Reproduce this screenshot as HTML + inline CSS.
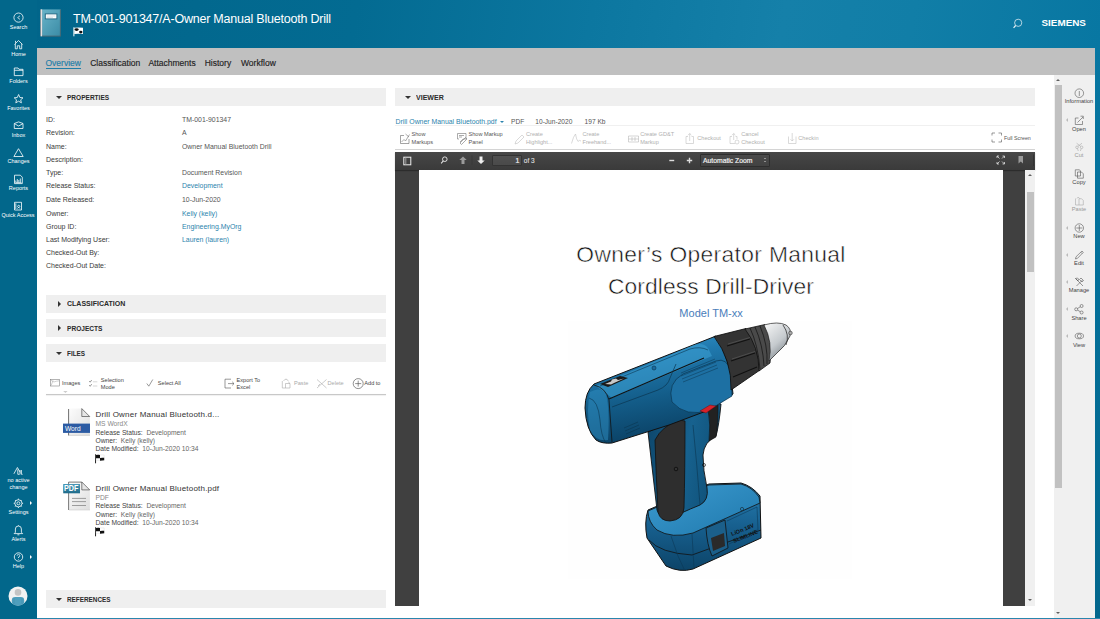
<!DOCTYPE html>
<html><head><meta charset="utf-8">
<style>
*{box-sizing:border-box;margin:0;padding:0}
html,body{width:1100px;height:619px;overflow:hidden;background:#fff;font-family:"Liberation Sans",sans-serif;color:#333}
.a{position:absolute;white-space:nowrap}
#side{position:absolute;left:0;top:0;width:37px;height:619px;background:#02678b}
#hdr{position:absolute;left:37px;top:0;width:1063px;height:48px;background:linear-gradient(100deg,#01658a 0%,#036b92 30%,#0c77a0 52%,#1580a9 70%,#117ea7 82%,#0877a2 100%)}
#rstrip{position:absolute;left:1095px;top:48px;width:5px;height:571px;background:linear-gradient(#0877a2,#04709a 40%,#02668c)}
#tabs{position:absolute;left:37px;top:48px;width:1058px;height:26.5px;background:#c0c0c0}
#bline{position:absolute;left:37px;top:617.5px;width:1063px;height:1.5px;background:#2a86ad}
.sec{position:absolute;background:#efefef;height:18px}
.sec .t{position:absolute;left:20.8px;top:5.8px;font-size:7.2px;line-height:8px;font-weight:bold;color:#2a2a2a;transform:scaleX(0.875);transform-origin:0 0}
.tri{position:absolute;width:0;height:0}
.tri.d{left:10.2px;top:7.6px;border-left:3.2px solid transparent;border-right:3.2px solid transparent;border-top:3.5px solid #333}
.tri.r{left:12px;top:6.2px;border-top:3.2px solid transparent;border-bottom:3.2px solid transparent;border-left:3.5px solid #333}
.pl{font-size:7px;line-height:8px;color:#3a3a3a}
.pv{font-size:6.9px;line-height:8px;color:#555}
.lnk{color:#2b83ad}
.ft{font-size:5.6px;line-height:7px;color:#444}.ft.dis{color:#aaa}.fn{font-size:8px;line-height:9px;color:#333;letter-spacing:.2px}.fl{font-size:6.7px;line-height:8px;color:#444}.fl .g{color:#666}
.vr{font-size:6.6px;line-height:8px;color:#555}.mt{font-size:5.6px;line-height:7px;color:#555}.mt.dis{color:#b0b0b0}
.rt{left:1063px;width:32px;text-align:center;font-size:5.7px;line-height:6px;color:#444}.rt.dis{color:#999}.rtri{left:1066px;width:0;height:0;border-top:2px solid transparent;border-bottom:2px solid transparent;border-right:2px solid #bbb}
.sb{position:absolute;left:0;width:37px;text-align:center;color:#fff;font-size:5.5px;line-height:6px}
.sb svg{display:block;margin:0 auto}
</style></head><body>
<div id="side"></div>
<div id="hdr"></div>
<div id="tabs"></div>
<div id="rstrip"></div>
<div id="bline"></div>


<!-- sidebar -->
<svg class="a" style="left:0;top:0" width="37" height="619" viewBox="0 0 37 619" fill="none" stroke="#fff" stroke-width="0.8">
 <!-- search -->
 <circle cx="18.5" cy="17.6" r="4.6"/>
 <path d="M20 15.8 L17.6 17.6 L20 19.4" stroke-width="0.7"/>
 <!-- home -->
 <path d="M14.5 44.5 L18.5 40.5 L22.5 44.5 M15.3 43.8 V48.8 H17.3 V45.8 H19.7 V48.8 H21.7 V43.8 M15.5 40.8 V42.8"/>
 <!-- folders -->
 <path d="M14.3 68 H18 L19 69.3 H23 V75.6 H14.3 Z M14.3 70.3 H23"/>
 <!-- favorites -->
 <path d="M18.6 94.5 L19.9 97.5 L23 97.8 L20.7 99.8 L21.4 102.8 L18.6 101.2 L15.8 102.8 L16.5 99.8 L14.2 97.8 L17.3 97.5 Z"/>
 <!-- inbox -->
 <path d="M14.3 123.5 L18.6 121.9 L23 123.5 V128.5 H14.3 Z M14.3 123.6 L18.6 126 L23 123.6"/>
 <!-- changes -->
 <path d="M18.5 148.7 L23.2 156.5 H13.9 Z"/>
 <!-- reports -->
 <path d="M14.5 175.2 H20.3 L22.3 177.2 V183.6 H14.5 Z M15.8 182.5 V180.5 M17.3 182.5 V179 M18.8 182.5 V180 M20.3 182.5 V178.5 M15.5 182.7 H21.5"/>
 <!-- quick access -->
 <path d="M14.5 202.3 H21.5 V210 H14.5 Z M15.8 203.3 V209 M18.7 205.3 A1.1 1.1 0 1 1 18.69 205.3 M17.5 208.5 L18.7 207.3 L19.9 208.5"/>
 <!-- no active change -->
 <path d="M13.9 473.8 L17.4 467.5 L20.2 472.3 M17.8 469.4 V474.3 H19.6 M20 470 V474.3 M21.4 470 V474.3 H22.6" />
 <!-- settings -->
 <circle cx="18.4" cy="503.3" r="3.6"/><circle cx="18.4" cy="503.3" r="1.5"/>
 <path d="M18.4 498.6 V499.7 M18.4 506.9 V508 M13.7 503.3 H14.8 M22 503.3 H23.1 M15.1 500 L15.9 500.8 M20.9 505.8 L21.7 506.6 M15.1 506.6 L15.9 505.8 M20.9 500.8 L21.7 500"/>
 <!-- alerts -->
 <path d="M15.4 532.3 V529 A3 3 0 0 1 21.4 529 V532.3 L22.7 533.6 H14.1 Z M17.4 534.8 H19.4 M18.4 525.3 V526"/>
 <!-- help -->
 <circle cx="18.5" cy="557" r="4.2"/>
 <path d="M17.2 555.7 A1.3 1.3 0 1 1 18.5 557 V558 M18.5 559 V559.6" stroke-width="0.7"/>
</svg>
<div class="a" style="left:30px;top:500.5px;width:0;height:0;border-top:2.3px solid transparent;border-bottom:2.3px solid transparent;border-left:2.3px solid #fff"></div>
<div class="a" style="left:30px;top:554.5px;width:0;height:0;border-top:2.3px solid transparent;border-bottom:2.3px solid transparent;border-left:2.3px solid #fff"></div>
<svg class="a" style="left:8px;top:585.5px" width="20" height="20" viewBox="0 0 20 20">
 <circle cx="10" cy="10" r="9.5" fill="#f2f2f2"/>
 <clipPath id="avc"><circle cx="10" cy="10" r="9.5"/></clipPath>
 <g clip-path="url(#avc)">
 <path d="M3.8 20 V14.2 Q3.8 10.9 7.2 10.9 H12.8 Q16.2 10.9 16.2 14.2 V20 Z" fill="#4f9fbd"/>
 <path d="M6 12 V20 M14 12 V20" stroke="#3f8aa8" stroke-width="0.5"/>
 <circle cx="10" cy="6.4" r="3.3" fill="#c4c4c4"/>
 </g>
</svg>
<div class="sb" style="top:24.2px">Search</div>
<div class="sb" style="top:51px">Home</div>
<div class="sb" style="top:77.8px">Folders</div>
<div class="sb" style="top:105px">Favorites</div>
<div class="sb" style="top:131.5px">Inbox</div>
<div class="sb" style="top:158px">Changes</div>
<div class="sb" style="top:185px">Reports</div>
<div class="sb" style="top:212px;left:-0.5px">Quick Access</div>
<div class="sb" style="top:477.2px">no active</div>
<div class="sb" style="top:484.2px">change</div>
<div class="sb" style="top:508.8px">Settings</div>
<div class="sb" style="top:535.6px">Alerts</div>
<div class="sb" style="top:562.6px">Help</div>

<!-- header content -->
<svg class="a" style="left:40px;top:8.5px" width="22" height="28" viewBox="0 0 22 28">
 <defs><linearGradient id="bk" x1="0" y1="0" x2="1" y2="1"><stop offset="0" stop-color="#6ab5ca"/><stop offset="1" stop-color="#3a8ba5"/></linearGradient>
 <linearGradient id="sp" x1="0" y1="0" x2="1" y2="0"><stop offset="0" stop-color="#9a8a88"/><stop offset="0.5" stop-color="#f4eeee"/><stop offset="1" stop-color="#b8b0b0"/></linearGradient></defs>
 <rect x="0.4" y="0.4" width="20.4" height="26.9" fill="url(#bk)"/>
 <rect x="0.4" y="0.4" width="1.8" height="26.9" fill="url(#sp)"/>
 <path d="M20.4 0.5 V27.2 M2 27.1 H20.6" stroke="#4c5a60" stroke-width="0.7"/>
 <rect x="5.3" y="4.9" width="11.6" height="5" fill="#fff" stroke="#1f6580" stroke-width="0.9"/>
 <path d="M6.6 7 H15.4 M6.6 8.4 H13" stroke="#9bb8c4" stroke-width="0.4"/>
</svg>

<div class="a" style="left:73px;top:12px;font-size:12.5px;letter-spacing:-0.22px;color:#fff">TM-001-901347/A-Owner Manual Bluetooth Drill</div>
<div class="a" style="left:1041.5px;top:16.5px;font-size:9.9px;font-weight:bold;color:#fff;letter-spacing:0px">SIEMENS</div>
<svg class="a" style="left:1010px;top:16px" width="14" height="14" viewBox="0 0 14 14" fill="none" stroke="#e8f2f6" stroke-width="0.75"><circle cx="8.2" cy="6.8" r="3.6"/><path d="M5.6 9.5 L3.6 11.8" stroke-width="1.2"/></svg>

<svg class="a" style="left:72.5px;top:26.5px" width="11" height="10" viewBox="0 0 11 10"><path d="M0.9 0.3 V9.3" stroke="#fff" stroke-width="1"/><path d="M1.3 0.7 Q5 0.2 10 0.7 V7 Q5 6.6 1.3 7 Z" fill="#fff"/><ellipse cx="3.6" cy="2.6" rx="2" ry="1.3" fill="#111"/><ellipse cx="7.8" cy="5.1" rx="1.7" ry="1.3" fill="#111"/></svg>
<!-- tabs -->
<div class="a" style="left:45.5px;top:57.6px;font-size:8.5px;color:#1f7ea8;-webkit-text-stroke:0.15px #1f7ea8">Overview</div>
<div class="a" style="left:46px;top:68px;width:35px;height:1.2px;background:#1f7ea8"></div>
<div class="a" style="left:90.2px;top:57.6px;font-size:8.5px;color:#222;-webkit-text-stroke:0.15px #222">Classification</div>
<div class="a" style="left:148.4px;top:57.6px;font-size:8.5px;color:#222;-webkit-text-stroke:0.15px #222">Attachments</div>
<div class="a" style="left:204.7px;top:57.6px;font-size:8.5px;color:#222;-webkit-text-stroke:0.15px #222">History</div>
<div class="a" style="left:241px;top:57.6px;font-size:8.5px;color:#222;-webkit-text-stroke:0.15px #222">Workflow</div>

<!-- left panel sections -->
<div class="sec" style="left:46px;top:88px;width:340px"><div class="tri d"></div><div class="t" style="transform:scaleX(0.91)">PROPERTIES</div></div>
<div class="sec" style="left:46px;top:294.5px;width:340px"><div class="tri r"></div><div class="t" style="transform:scaleX(0.975)">CLASSIFICATION</div></div>
<div class="sec" style="left:46px;top:319px;width:340px"><div class="tri r"></div><div class="t" style="transform:scaleX(0.916)">PROJECTS</div></div>
<div class="sec" style="left:46px;top:344px;width:340px"><div class="tri d"></div><div class="t" style="transform:scaleX(0.89)">FILES</div></div>
<div class="sec" style="left:46px;top:590px;width:340px"><div class="tri d"></div><div class="t" style="transform:scaleX(0.886)">REFERENCES</div></div>

<div class="sec" style="left:395px;top:88px;width:640px"><div class="tri d"></div><div class="t" style="transform:scaleX(0.98)">VIEWER</div></div>

<!-- properties -->
<div class="a pl" style="left:46px;top:116.1px">ID:</div><div class="a pv" style="left:182px;top:116.1px">TM-001-901347</div>
<div class="a pl" style="left:46px;top:129.2px">Revision:</div><div class="a pv" style="left:182px;top:129.2px">A</div>
<div class="a pl" style="left:46px;top:142.7px">Name:</div><div class="a pv" style="left:182px;top:142.7px">Owner Manual Bluetooth Drill</div>
<div class="a pl" style="left:46px;top:155.8px">Description:</div>
<div class="a pl" style="left:46px;top:168.8px">Type:</div><div class="a pv" style="left:182px;top:168.8px">Document Revision</div>
<div class="a pl" style="left:46px;top:181.9px">Release Status:</div><div class="a pv lnk" style="left:182px;top:181.9px">Development</div>
<div class="a pl" style="left:46px;top:196.3px">Date Released:</div><div class="a pv" style="left:182px;top:196.3px">10-Jun-2020</div>
<div class="a pl" style="left:46px;top:209.7px">Owner:</div><div class="a pv lnk" style="left:182px;top:209.7px">Kelly (kelly)</div>
<div class="a pl" style="left:46px;top:223.0px">Group ID:</div><div class="a pv lnk" style="left:182px;top:223.0px">Engineering.MyOrg</div>
<div class="a pl" style="left:46px;top:236.1px">Last Modifying User:</div><div class="a pv lnk" style="left:182px;top:236.1px">Lauren (lauren)</div>
<div class="a pl" style="left:46px;top:248.7px">Checked-Out By:</div>
<div class="a pl" style="left:46px;top:261.7px">Checked-Out Date:</div>

<!-- files toolbar -->
<svg class="a" style="left:40px;top:370px" width="350" height="30" viewBox="40 370 350 30" fill="none" stroke="#555" stroke-width="0.6">
 <!-- images -->
 <rect x="50.4" y="379.4" width="9.3" height="6.6" stroke="#777" stroke-width="0.55"/>
 <path d="M51.2 385.4 L53 380.5 M51 380.3 L54 382 L56.5 381.2 L59.3 380.8" stroke="#999" stroke-width="0.45"/>
 <path d="M63.2 391.2 H67.6 L65.4 392.8 Z" fill="#bbb" stroke="none"/>
 <!-- selection mode -->
 <path d="M89.2 381 L90.2 382.2 L91.7 380 M89.2 385.1 L90.2 386.3 L91.7 384.1" stroke="#555" stroke-width="0.6"/>
 <path d="M92.9 381.8 H97.3 M92.9 386 H97.3" stroke="#bbb" stroke-width="0.6"/>
 <!-- select all -->
 <path d="M146.8 383.5 L148.8 386.2 L152.8 379.5" stroke-width="0.6"/>
 <!-- export -->
 <path d="M231 379.2 H225 V388 H231 M228 383.6 H234 M232.2 381.8 L234 383.6 L232.2 385.4" stroke-width="0.6"/>
 <!-- paste -->
 <path d="M282.3 381 V388 H290 V383.5 L288.2 381.8 M283.5 381 L285 379.3 H287 L288.2 381" stroke="#aaa" stroke-width="0.6"/>
 <path d="M285.5 383.5 H290 M285.5 383.5 V388" stroke="#aaa" stroke-width="0.6"/>
 <!-- delete -->
 <path d="M317 379.5 L326.5 388 M326.5 379.5 L317 388 M318 386 L320 384" stroke="#aaa" stroke-width="0.6"/>
 <!-- add to -->
 <circle cx="358.2" cy="383.6" r="5" stroke-width="0.65"/>
 <path d="M358.2 380.6 V386.6 M355.2 383.6 H361.2" stroke-width="0.65"/>
</svg>
<div class="a ft" style="left:62px;top:380px">Images</div>
<div class="a ft" style="left:100.8px;top:377.2px">Selection</div>
<div class="a ft" style="left:100.8px;top:384px">Mode</div>
<div class="a ft" style="left:157.8px;top:380px">Select All</div>
<div class="a ft" style="left:236.6px;top:377.2px">Export To</div>
<div class="a ft" style="left:236.6px;top:384px">Excel</div>
<div class="a ft dis" style="left:294px;top:380px">Paste</div>
<div class="a ft dis" style="left:327.5px;top:380px">Delete</div>
<div class="a ft" style="left:364.3px;top:380px">Add to</div>
<div class="a" style="left:46px;top:394.3px;width:340px;height:1.2px;background:#c8c8c8;box-shadow:0 0.6px 0.8px rgba(0,0,0,.12)"></div>

<!-- file 1 -->
<svg class="a" style="left:60px;top:405px" width="32" height="32" viewBox="60 405 32 32">
 <defs><linearGradient id="pg" x1="0" y1="0" x2="1" y2="1"><stop offset="0" stop-color="#fdfdfd"/><stop offset="1" stop-color="#dedede"/></linearGradient></defs>
 <path d="M68.3 408.4 H81.8 L89.9 416.5 V435.2 H68.3 Z" fill="url(#pg)"/>
 <path d="M68.6 409 V435.5" stroke="#333" stroke-width="0.7"/>
 <path d="M81.8 408.6 V416.5 H89.7 Z" fill="#e6e6e6" stroke="#333" stroke-width="0.6" stroke-linejoin="round"/>
 <path d="M69 435.4 H90" stroke="#c8c8c8" stroke-width="0.7"/>
 <rect x="63" y="423.6" width="27" height="9.3" fill="#2c5ba3"/>
</svg>
<div class="a" style="left:65px;top:424.8px;font-size:6.6px;line-height:7px;color:#fff">Word</div>
<div class="a fn" style="left:95.5px;top:410px">Drill Owner Manual Bluetooth.d...</div>
<div class="a fl" style="left:95.5px;top:419.8px;color:#888">MS WordX</div>
<div class="a fl" style="left:95.5px;top:428.5px"><span class="k">Release Status:</span>&nbsp; <span class="g">Development</span></div>
<div class="a fl" style="left:95.5px;top:437px"><span class="k">Owner:</span>&nbsp; <span class="g">Kelly (kelly)</span></div>
<div class="a fl" style="left:95.5px;top:445.3px"><span class="k">Date Modified:</span>&nbsp; <span class="g">10-Jun-2020 10:34</span></div>
<svg class="a flag" style="left:95px;top:453.6px" width="11" height="10" viewBox="0 0 11 10"><path d="M0.55 0.3 V9.3" stroke="#222" stroke-width="1"/><path d="M1 1 Q3 0.6 5 0.9 H9.2 V6.4 H1 Z" fill="#fff" stroke="#ccc" stroke-width="0.3"/><path d="M1 1 Q3 0.6 5 0.9 V4.3 Q3 4 1 4.3 Z M5 3.9 Q7 3.6 9.2 3.8 V6.3 Q7 6.5 5 6.8 Z" fill="#111"/></svg>

<!-- file 2 -->
<svg class="a" style="left:60px;top:478px" width="32" height="36" viewBox="60 478 32 36">
 <defs><linearGradient id="pdfb" x1="0" y1="0" x2="0" y2="1"><stop offset="0" stop-color="#4a98b8"/><stop offset="1" stop-color="#1f6b8a"/></linearGradient></defs>
 <path d="M68.3 481.8 H81.8 L89.9 489.9 V509.8 H68.3 Z" fill="url(#pg)"/>
 <path d="M68.6 510 V482.1 H81.8" stroke="#444" stroke-width="0.7" fill="none"/>
 <path d="M81.8 482 V489.9 H89.7 Z" fill="#e6e6e6" stroke="#333" stroke-width="0.6" stroke-linejoin="round"/>
 <path d="M69 509.9 H90" stroke="#c8c8c8" stroke-width="0.7"/>
 <path d="M72 498.4 H86 M72 501.6 H86 M72 505.5 H86" stroke="#7a7a7a" stroke-width="0.7"/>
 <rect x="63.2" y="484" width="16.8" height="9.3" fill="url(#pdfb)"/>
</svg>
<div class="a" style="left:64.3px;top:484.2px;font-size:9px;line-height:8.5px;font-weight:bold;color:#fff;transform:scaleX(0.8);transform-origin:0 0">PDF</div>
<div class="a fn" style="left:95.5px;top:484px">Drill Owner Manual Bluetooth.pdf</div>
<div class="a fl" style="left:95.5px;top:493.5px;color:#888">PDF</div>
<div class="a fl" style="left:95.5px;top:502px"><span class="k">Release Status:</span>&nbsp; <span class="g">Development</span></div>
<div class="a fl" style="left:95.5px;top:510.6px"><span class="k">Owner:</span>&nbsp; <span class="g">Kelly (kelly)</span></div>
<div class="a fl" style="left:95.5px;top:519.1px"><span class="k">Date Modified:</span>&nbsp; <span class="g">10-Jun-2020 10:34</span></div>
<svg class="a flag" style="left:95px;top:526.7px" width="11" height="10" viewBox="0 0 11 10"><path d="M0.55 0.3 V9.3" stroke="#222" stroke-width="1"/><path d="M1 1 Q3 0.6 5 0.9 H9.2 V6.4 H1 Z" fill="#fff" stroke="#ccc" stroke-width="0.3"/><path d="M1 1 Q3 0.6 5 0.9 V4.3 Q3 4 1 4.3 Z M5 3.9 Q7 3.6 9.2 3.8 V6.3 Q7 6.5 5 6.8 Z" fill="#111"/></svg>

<!-- viewer file row -->
<div class="a" style="left:395.5px;top:118px;font-size:6.9px;line-height:8px;color:#2b83ad">Drill Owner Manual Bluetooth.pdf</div>
<div class="a" style="left:499.8px;top:121.3px;width:0;height:0;border-left:2.2px solid transparent;border-right:2.2px solid transparent;border-top:2.4px solid #2b83ad"></div>
<div class="a vr" style="left:511px;top:117.5px">PDF</div>
<div class="a vr" style="left:535.3px;top:117.5px">10-Jun-2020</div>
<div class="a vr" style="left:584.6px;top:117.5px">197 Kb</div>
<div class="a" style="left:395px;top:125px;width:640px;height:0.8px;background:#f0f0f0"></div>

<!-- markup toolbar -->
<svg class="a" style="left:395px;top:128px" width="640" height="20" viewBox="395 128 640 20" fill="none" stroke="#666" stroke-width="0.6">
 <path d="M400.5 135.5 H404 M400.5 135.5 V143.5 H409 V139" />
 <path d="M401.5 142 L404 139.5 L405.5 141 L409.5 134.5 M405.5 134 L409 137" stroke-width="0.55"/>
 <path d="M457.5 133.5 H466 V139 H463 L460 142 M457.5 133.5 V139 H459 M459 135.5 H464 M459 137 H462" stroke-width="0.55"/>
 <path d="M460 143 L465.5 137.5 L467 139 L461.5 144.5 Z" stroke-width="0.55"/>
 <path d="M515 144 L516 141 L522 135 L524 137 L518 143 Z" stroke="#bbb" stroke-width="0.55"/>
 <path d="M571.5 143.5 Q573.5 136 575.5 134 Q576.5 140 578 141.5 Q579 139.5 581 141" stroke="#bbb" stroke-width="0.55"/>
 <path d="M628.5 136 H638.5 V142 H628.5 Z M628.5 139 H638.5 M632 137 V141 M635 137 V141" stroke="#aaa" stroke-width="0.5"/>
 <path d="M686 136.5 V143.5 H693.5 V136.5 H691.5 M686 136.5 H688 M689.7 141 V133.5 M688 135.2 L689.7 133.5 L691.4 135.2" stroke="#bbb" stroke-width="0.55"/>
 <path d="M730 136.5 V143.5 H735 M730 136.5 H732 M733.7 140 V133.5 M732 135.2 L733.7 133.5 L735.4 135.2 M735.5 136.5 H737 V139" stroke="#bbb" stroke-width="0.55"/>
 <circle cx="737" cy="142" r="2" stroke="#bbb" stroke-width="0.55"/>
 <path d="M788.5 136.5 V143.5 H796 V136.5 M792.2 133 V141 M790.5 139.3 L792.2 141 L793.9 139.3" stroke="#bbb" stroke-width="0.55"/>
 <path d="M992 135.5 V133 H995 M998.5 133 H1001.5 V135.5 M1001.5 139.5 V142 H998.5 M995 142 H992 V139.5" stroke="#555" stroke-width="0.6"/>
</svg>
<div class="a mt" style="left:411.5px;top:131.2px">Show</div>
<div class="a mt" style="left:411.5px;top:138.5px">Markups</div>
<div class="a mt" style="left:468.5px;top:131.2px">Show Markup</div>
<div class="a mt" style="left:468.5px;top:138.5px">Panel</div>
<div class="a mt dis" style="left:526px;top:131.2px">Create</div>
<div class="a mt dis" style="left:526px;top:138.5px">Highlight...</div>
<div class="a mt dis" style="left:582.5px;top:131.2px">Create</div>
<div class="a mt dis" style="left:582.5px;top:138.5px">Freehand...</div>
<div class="a mt dis" style="left:640.2px;top:131.2px">Create GD&amp;T</div>
<div class="a mt dis" style="left:640.2px;top:138.5px">Markup</div>
<div class="a mt dis" style="left:697.3px;top:135.0px">Checkout</div>
<div class="a mt dis" style="left:741.2px;top:131.2px">Cancel</div>
<div class="a mt dis" style="left:741.2px;top:138.5px">Checkout</div>
<div class="a mt dis" style="left:798.3px;top:135.0px">Checkin</div>
<div class="a mt" style="left:1004px;top:135.0px;font-size:5.3px">Full Screen</div>
<div class="a" style="left:395px;top:148.6px;width:640px;height:1.4px;background:#d4d4d4"></div>

<!-- pdf viewer -->
<div class="a" style="left:395px;top:152px;width:640px;height:454px;background:#404040"></div>
<div class="a" style="left:395px;top:152px;width:640px;height:18px;background:linear-gradient(#474747,#3a3a3a);box-shadow:0 1px 1px rgba(0,0,0,.3)"></div>
<div class="a" style="left:418.8px;top:170px;width:584.5px;height:436px;background:#fff"></div>
<div class="a" style="left:1025.4px;top:170px;width:9.2px;height:436px;background:#f0f0f0"></div>
<div class="a" style="left:1026.5px;top:192px;width:7px;height:80px;background:#c1c1c1"></div>
<div class="a" style="left:1027.8px;top:173.5px;width:0;height:0;border-left:2.2px solid transparent;border-right:2.2px solid transparent;border-bottom:2.4px solid #606060"></div>
<div class="a" style="left:1027.8px;top:599px;width:0;height:0;border-left:2.2px solid transparent;border-right:2.2px solid transparent;border-top:2.4px solid #606060"></div>
<svg class="a" style="left:395px;top:152px" width="640" height="18" viewBox="395 152 640 18">
 <rect x="403.8" y="157.2" width="7" height="7.6" fill="none" stroke="#eee" stroke-width="1"/>
 <path d="M405.8 157.2 V164.8" stroke="#aaa" stroke-width="0.9"/>
 <circle cx="444.8" cy="159.2" r="2.3" fill="none" stroke="#eee" stroke-width="0.9"/>
 <path d="M443.2 161 L441.2 163.3" stroke="#eee" stroke-width="1.1"/>
 <path d="M463 156.5 L459.3 160 H461.5 V164 H464.5 V160 H466.7 Z" fill="#9a9a9a"/>
 <path d="M472 155.5 V164.5" stroke="#333" stroke-width="0.6"/>
 <path d="M481 164 L477.3 160.5 H479.5 V156.5 H482.5 V160.5 H484.7 Z" fill="#eee"/>
 <path d="M669.3 160.5 H674.2" stroke="#ddd" stroke-width="1.4"/>
 <path d="M686.8 160.5 H692.2 M689.5 157.8 V163.2" stroke="#ddd" stroke-width="1.4"/>
 <path d="M997 156 L999.5 158.5 M997 156 H999 M997 156 V158 M1004.5 156 L1002 158.5 M1004.5 156 H1002.5 M1004.5 156 V158 M997 164 L999.5 161.5 M997 164 H999 M997 164 V162 M1004.5 164 L1002 161.5 M1004.5 164 H1002.5 M1004.5 164 V162" stroke="#ddd" stroke-width="0.8"/>
 <path d="M1018.5 156 H1023 V163.5 L1020.75 161.5 L1018.5 163.5 Z" fill="#9a9a9a"/>
 <path d="M1033.5 154.5 V166" stroke="#2e2e2e" stroke-width="0.7"/>
</svg>
<div class="a" style="left:491.5px;top:154.7px;width:30px;height:11.6px;background:linear-gradient(#505050,#4a4a4a);border:0.6px solid #333;border-radius:1px"></div>
<div class="a" style="left:491.5px;top:155.2px;width:28px;text-align:right;font-size:7px;line-height:11px;color:#eee;-webkit-text-stroke:0.2px #eee">1</div>
<div class="a" style="left:523.8px;top:155.2px;font-size:6.5px;line-height:11px;color:#ddd;-webkit-text-stroke:0.15px #ddd">of 3</div>
<div class="a" style="left:699.5px;top:153.8px;width:70px;height:12.8px;background:linear-gradient(#4a4a4a,#424242);border:0.6px solid #2e2e2e;border-radius:1px"></div>
<div class="a" style="left:703px;top:155.2px;font-size:6.8px;line-height:11px;color:#eee;-webkit-text-stroke:0.2px #eee">Automatic Zoom</div>
<div class="a" style="left:763.5px;top:158px;width:0;height:0;border-left:1.6px solid transparent;border-right:1.6px solid transparent;border-bottom:1.8px solid #ddd"></div>
<div class="a" style="left:763.5px;top:161px;width:0;height:0;border-left:1.6px solid transparent;border-right:1.6px solid transparent;border-top:1.8px solid #ddd"></div>

<!-- outer scrollbar + right toolbar -->
<div class="a" style="left:1053.8px;top:74.5px;width:41.2px;height:543px;background:#f0f0f0"></div>
<div class="a" style="left:1055px;top:85px;width:7px;height:403px;background:#c1c1c1"></div>
<div class="a" style="left:1056.3px;top:78.5px;width:0;height:0;border-left:2.2px solid transparent;border-right:2.2px solid transparent;border-bottom:2.4px solid #606060"></div>
<div class="a" style="left:1056.3px;top:612px;width:0;height:0;border-left:2.2px solid transparent;border-right:2.2px solid transparent;border-top:2.4px solid #606060"></div>

<!-- right toolbar -->
<svg class="a" style="left:1063px;top:80px" width="32" height="270" viewBox="1063 80 32 270" fill="none" stroke="#555" stroke-width="0.6">
 <circle cx="1079.3" cy="93.2" r="4.3"/><path d="M1079.3 91 V96"/>
 <path d="M1078.5 118 H1075.3 V124.5 H1082.5 V121 M1077.5 122.5 L1083 117 M1080.5 116.2 H1083.3 V119" />
 <g stroke="#aaa"><circle cx="1077" cy="147.3" r="1.3"/><circle cx="1081.6" cy="147.3" r="1.3"/><path d="M1078 146.3 L1082 143.2 M1080.6 146.3 L1076.6 143.2 M1077.5 148.6 L1078.3 151 M1081.2 148.6 L1080.4 151"/></g>
 <path d="M1075.3 169.8 H1079.5 L1080.5 171 V176 H1075.3 Z M1077.5 172 H1081.5 L1083.3 173.8 V178.2 H1077.5 Z" fill="#f0f0f0"/>
 <g stroke="#aaa"><path d="M1075.5 198.5 V205 H1083.3 V200.5 L1081.5 198.7 H1079 M1077 198.5 L1078.2 197 L1079.5 198.5 M1079 198.7 V205"/></g>
 <circle cx="1079.3" cy="228" r="4.2"/><path d="M1079.3 225 V231 M1076.3 228 H1082.3"/>
 <path d="M1075.5 259 L1076 256.8 L1082 251 L1083.3 252.3 L1077.5 258.3 Z M1080.8 252.2 L1082.1 253.5"/>
 <path d="M1075.5 278.5 L1083 286 M1076.5 286 L1082.5 280 M1081 278 L1083.5 280.5 L1082 282 L1079.5 279.5 Z M1075.5 278.5 L1077.5 278 L1078.5 279 L1078 281 Z"/>
 <circle cx="1081.6" cy="306" r="1.5"/><circle cx="1081.6" cy="312.5" r="1.5"/><circle cx="1076.2" cy="309.3" r="1.5"/><path d="M1077.5 308.5 L1080.3 306.8 M1077.5 310.1 L1080.3 311.7"/>
 <ellipse cx="1079.3" cy="336" rx="4.2" ry="2.8"/><ellipse cx="1079.3" cy="336" rx="2" ry="2"/>
</svg>
<div class="a rtri" style="top:118.3px"></div>
<div class="a rtri" style="top:226px"></div>
<div class="a rtri" style="top:253px"></div>
<div class="a rtri" style="top:280px"></div>
<div class="a rtri" style="top:307.3px"></div>
<div class="a rtri" style="top:334.3px"></div>
<div class="a rt" style="top:98.4px">Information</div>
<div class="a rt" style="top:125.8px">Open</div>
<div class="a rt dis" style="top:152.2px">Cut</div>
<div class="a rt" style="top:179.2px">Copy</div>
<div class="a rt dis" style="top:206.2px">Paste</div>
<div class="a rt" style="top:233.4px">New</div>
<div class="a rt" style="top:260.2px">Edit</div>
<div class="a rt" style="top:287.4px">Manage</div>
<div class="a rt" style="top:314.6px">Share</div>
<div class="a rt" style="top:342.0px">View</div>

<!-- pdf page content -->
<div class="a" style="left:418.8px;top:240px;width:584.5px;text-align:center;font-size:22.8px;line-height:28px;color:#111;letter-spacing:0.35px;-webkit-text-stroke:0.5px #fff">Owner’s Operator Manual</div>
<div class="a" style="left:418.8px;top:272.3px;width:584.5px;text-align:center;font-size:22.8px;line-height:28px;color:#111;letter-spacing:0.1px;-webkit-text-stroke:0.5px #fff">Cordless Drill-Driver</div>
<div class="a" style="left:418.8px;top:305.5px;width:584.5px;text-align:center;font-size:11px;line-height:14px;color:#4a7dba">Model TM-xx</div>

<!-- drill -->
<svg class="a" style="left:560px;top:315px" width="300" height="275" viewBox="560 315 300 275">
 <defs>
  <linearGradient id="gb" x1="0" y1="0" x2="0.25" y2="1">
   <stop offset="0" stop-color="#3a9dd2"/><stop offset="0.3" stop-color="#2079ae"/><stop offset="0.65" stop-color="#135c88"/><stop offset="1" stop-color="#0b4266"/>
  </linearGradient>
  <linearGradient id="gh" x1="0" y1="0" x2="1" y2="0.3">
   <stop offset="0" stop-color="#0c4468"/><stop offset="0.6" stop-color="#17628f"/><stop offset="1" stop-color="#10527a"/>
  </linearGradient>
  <linearGradient id="gc" x1="0" y1="0" x2="0.6" y2="1">
   <stop offset="0" stop-color="#f8f8f8"/><stop offset="0.6" stop-color="#c5cace"/><stop offset="1" stop-color="#7b8389"/>
  </linearGradient>
  <linearGradient id="gbat" x1="0" y1="0" x2="0" y2="1">
   <stop offset="0" stop-color="#2780b4"/><stop offset="0.5" stop-color="#175f8e"/><stop offset="1" stop-color="#0c4468"/>
  </linearGradient>
  <linearGradient id="gbt" x1="0" y1="0" x2="1" y2="1">
   <stop offset="0" stop-color="#3c9bd0"/><stop offset="1" stop-color="#1f78ac"/>
  </linearGradient>
 </defs>
 <rect x="568" y="321" width="284" height="258" fill="#fefefe"/>
 <!-- battery -->
 <path d="M648 510 L709 484 L741 483 Q752 486 760 496 L761 538 L693 569 Q680 573 666 566 L647 538 Q644 522 648 510 Z" fill="url(#gbat)" stroke="#111" stroke-width="1"/>
 <path d="M648 511 L709 485 L741 484 Q752 487 759 497 L760 503 L693 533 Q672 539 657 530 Q648 522 648 511 Z" fill="url(#gbt)" stroke="#111" stroke-width="0.8"/>
 <path d="M649 540 Q660 553 692 555 L761 530" fill="none" stroke="#111" stroke-width="0.8"/>
 <path d="M671 536 L678 556 L684 569 M692 534 L694 568" fill="none" stroke="#0a3550" stroke-width="0.5"/>
 <path d="M706 528 L725 520 L728 548 L712 556 Q707 545 706 528 Z" fill="#1b5f8a" stroke="#111" stroke-width="0.8"/>
 <path d="M711 538 L724 533 L725 546 L713 551 Z" fill="#2a2a2a"/>
 <path d="M727 521 L757 507 L758 530 L729 544" fill="none" stroke="#0a3550" stroke-width="0.5"/>
 <text x="732" y="536" font-size="5.6" font-weight="bold" fill="#111" transform="rotate(-22 732 536)">LiOn 18V</text>
 <text x="734" y="543" font-size="5.6" font-weight="bold" fill="#111" transform="rotate(-22 734 543)">SLIMLINE</text>
 <circle cx="742" cy="509" r="1.6" fill="#2a86ba" stroke="#111" stroke-width="0.5"/>
 <!-- handle blue -->
 <path d="M648 432 L712 402 L721 404 Q719 425 716 436 Q704 442 703 455 Q703 470 707 488 Q709 500 700 505 Q680 513 670 519 Q660 519 657 510 Z" fill="url(#gh)" stroke="#111" stroke-width="0.9"/>
 <path d="M708 409 L718 405 Q718 425 716 437 L709 441 Q711 425 708 409 Z" fill="#222" stroke="#111" stroke-width="0.6"/>
 <path d="M693 425 Q697 465 700 505" fill="none" stroke="#0a3550" stroke-width="0.6"/>
 <circle cx="704" cy="465" r="1.5" fill="none" stroke="#000" stroke-width="0.6"/>
 <!-- handle black grip -->
 <path d="M655 440 Q662 426 679 420 L685 421 Q685 470 684 508 Q683 520 670 521 Q660 521 658 512 Q656 475 655 440 Z" fill="#2e2e2e" stroke="#111" stroke-width="0.8"/>
 <circle cx="676" cy="469" r="1.8" fill="#333" stroke="#000" stroke-width="0.6"/>
 <!-- trigger -->
 <!-- body -->
 <path d="M594 384 L716 336 Q726 352 731 376 L733 394 L709 410 L669 425 L612 443 Q602 444 596 440 Q586 430 585 408 Q585 392 594 384 Z" fill="url(#gb)" stroke="#111" stroke-width="1"/>
 <path d="M596 386 L694 345 Q703 342 708 348 L712 356 L612 398 Q604 392 596 386 Z" fill="#3ea3d6" opacity="0.55"/>
 <path d="M590 392 Q600 386 606 394 Q610 410 608 440 Q596 442 590 430 Q586 410 590 392 Z" fill="#2f8fc4" opacity="0.5"/>
 <path d="M594 385 Q606 388 609 400 L612 442" fill="none" stroke="#111" stroke-width="0.8"/>
 <path d="M589 398 Q598 400 600 420 Q601 436 606 443" fill="none" stroke="#0a3550" stroke-width="0.6"/>
 <path d="M600 386 L612 381 L690 349 Q700 346 708 350" fill="none" stroke="#0a3550" stroke-width="0.6"/>
 <path d="M609 399 L704 358" fill="none" stroke="#111" stroke-width="1.1"/>
 <path d="M612 407 L658 390 Q668 386 670 378 L676 364" fill="none" stroke="#0a3550" stroke-width="0.7"/>
 <path d="M672 402 Q667 383 683 374 L716 361 Q727 357 731 372 L732 396 L709 410 Q686 418 672 402 Z" fill="#1d70a3" stroke="#0a3550" stroke-width="0.7"/>
 <path d="M681 373 L715 359 M681 376 L716 362 M682 379 L717 365 M683 382 L718 368" stroke="#0a3550" stroke-width="0.5"/>
 <path d="M600 384 L620 376 L628 378 L608 387 Z" fill="#1a1a1a"/>
 <path d="M605 384 L611 381.5 L612 379.5 L616 378.5 L618 380 L624 378.5 L614 383 L611 384.5 Z" fill="#c8c8c8"/>
 <circle cx="654" cy="368" r="2" fill="#1b6a9c" stroke="#0a3550" stroke-width="0.6"/>
 <path d="M624 428 L638 422 M625 431 L639 425 M626 434 L640 428" stroke="#0a3550" stroke-width="0.6"/>
 <path d="M700 411 L710 405 L716 406 L706 413 Z" fill="#d6222a" stroke="#600" stroke-width="0.4"/>
 <!-- collar -->
 <path d="M714 336.5 L746 328.5 Q758 345 760 370 L731 390 Q732 360 714 336.5 Z" fill="#333" stroke="#111" stroke-width="0.9"/>
 <path d="M727 346 L750 339 M731 361 L755 353 M733 377 L757 367" stroke="#111" stroke-width="1.1"/>
 <path d="M728 344 L750 337.5 M732 359 L755 351.5" stroke="#666" stroke-width="0.5"/>
 <path d="M745 329 L765 324.5 Q773 345 770 363 L759 371 Q759 347 745 329 Z" fill="#4a4a4a" stroke="#111" stroke-width="0.8"/>
 <path d="M750 328 Q758 345 760 369 M755 327 Q763 345 764 366 M760 326 Q768 345 767 364" stroke="#111" stroke-width="0.7" fill="none"/>
 <!-- chuck -->
 <path d="M764 325 Q778 321 786 325 Q792 329 790 336 Q786 346 776 354 L769 361 Q773 342 764 325 Z" fill="url(#gc)" stroke="#222" stroke-width="0.7"/>
 <path d="M783 325 Q790 335 786 345" stroke="#333" stroke-width="0.8" fill="none"/>
 <circle cx="790.5" cy="333" r="1.8" fill="#aaa" stroke="#222" stroke-width="0.5"/>
</svg>

</body></html>
